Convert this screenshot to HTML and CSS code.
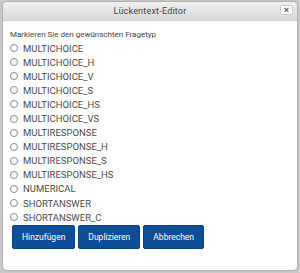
FILE: index.html
```
<!DOCTYPE html>
<html lang="de">
<head>
    <meta charset="UTF-8">
    <title>Lückentext-Editor</title>
    <link rel="stylesheet" href="styles.css">
</head>
<body>
    <div class="dialog">
        <div class="dialog-header">
            <span class="dialog-title">Lückentext-Editor</span>
            <button class="close-btn">&#215;</button>
        </div>
        <div class="dialog-body">
            <p class="intro">Markieren Sie den gewünschten Fragetyp</p>
            <div class="options">
                <label class="option"><input type="radio" name="qtype"> MULTICHOICE</label>
                <label class="option"><input type="radio" name="qtype"> MULTICHOICE_H</label>
                <label class="option"><input type="radio" name="qtype"> MULTICHOICE_V</label>
                <label class="option"><input type="radio" name="qtype"> MULTICHOICE_S</label>
                <label class="option"><input type="radio" name="qtype"> MULTICHOICE_HS</label>
                <label class="option"><input type="radio" name="qtype"> MULTICHOICE_VS</label>
                <label class="option"><input type="radio" name="qtype"> MULTIRESPONSE</label>
                <label class="option"><input type="radio" name="qtype"> MULTIRESPONSE_H</label>
                <label class="option"><input type="radio" name="qtype"> MULTIRESPONSE_S</label>
                <label class="option"><input type="radio" name="qtype"> MULTIRESPONSE_HS</label>
                <label class="option"><input type="radio" name="qtype"> NUMERICAL</label>
                <label class="option"><input type="radio" name="qtype"> SHORTANSWER</label>
                <label class="option"><input type="radio" name="qtype"> SHORTANSWER_C</label>
            </div>
            <div class="actions">
                <button class="btn">Hinzufügen</button>
                <button class="btn">Duplizieren</button>
                <button class="btn">Abbrechen</button>
            </div>
        </div>
    </div>
</body>
</html>
```
FILE: styles.css
```
body {
    margin: 0;
    padding: 2px 3px 3px 3px;
    background-color: #c9c9c9;
    font-family: Roboto, "Liberation Sans", sans-serif;
}
.dialog {
    width: 294px;
    height: 268px;
    background-color: #fff;
    border-radius: 4px;
    box-shadow: 0 0 2px rgba(0, 0, 0, 0.4);
    overflow: hidden;
    display: flex;
    flex-direction: column;
}
.dialog-header {
    height: 18px;
    background: linear-gradient(#f0f0f0, #d9d9d9);
    border-bottom: 1px solid #cfcfcf;
    display: flex;
    align-items: center;
    justify-content: center;
    position: relative;
}
.dialog-title {
    font-size: 9px;
    color: #444;
    letter-spacing: 0.2px;
}
.close-btn {
    position: absolute;
    right: 4px;
    top: 3px;
    width: 13px;
    height: 10px;
    padding: 0;
    border: 1px solid #ccc;
    border-radius: 2px;
    background: #fff;
    color: #555;
    font-size: 9px;
    line-height: 7px;
    font-weight: bold;
}
.dialog-body {
    padding: 9px 7px 0 7px;
}
.intro {
    margin: 0;
    font-size: 8px;
    line-height: 10px;
    color: #444;
}
.options {
    display: flex;
    flex-direction: column;
    margin-top: 1px;
}
.option {
    display: flex;
    align-items: center;
    height: 14.1px;
    font-size: 9.5px;
    color: #4a4a4a;
}
.option input {
    appearance: none;
    width: 8px;
    height: 8px;
    margin: 0 5px 0 0;
    border: 1px solid #888;
    border-radius: 50%;
    background: #fff;
}
.actions {
    display: flex;
    gap: 3px;
    margin-top: 1px;
    padding-left: 2px;
}
.btn {
    height: 24px;
    padding: 0 9px;
    font-family: Roboto, "Liberation Sans", sans-serif;
    font-size: 8.5px;
    color: #fff;
    background-color: #0e4e96;
    border: 1px solid #0a4282;
    border-radius: 2px;
}
```
